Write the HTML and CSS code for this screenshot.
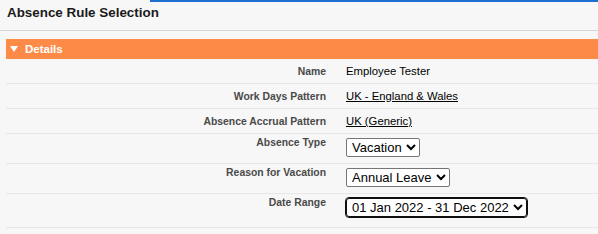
FILE: index.html
```html
<!DOCTYPE html>
<html>
<head>
<meta charset="utf-8">
<link rel="stylesheet" href="styles.css">
</head>
<body>
<div class="topbar"></div>
<div class="header">
  <h1 class="title">Absence Rule Selection</h1>
</div>
<div class="section">
  <div class="section-head"><span class="tri"></span>Details</div>
  <div class="rows">
    <div class="row text-row first-row">
      <div class="label">Name</div>
      <div class="value">Employee Tester</div>
    </div>
    <div class="row text-row">
      <div class="label">Work Days Pattern</div>
      <div class="value"><a class="link" href="#">UK - England &amp; Wales</a></div>
    </div>
    <div class="row text-row">
      <div class="label">Absence Accrual Pattern</div>
      <div class="value"><a class="link" href="#">UK (Generic)</a></div>
    </div>
    <div class="row sel-row">
      <div class="label">Absence Type</div>
      <div class="value"><select class="sel"><option>Vacation</option></select></div>
    </div>
    <div class="row sel-row">
      <div class="label">Reason for Vacation</div>
      <div class="value"><select class="sel"><option>Annual Leave</option></select></div>
    </div>
    <div class="row sel-row last-row">
      <div class="label">Date Range</div>
      <div class="value"><select class="sel focused"><option>01 Jan 2022 - 31 Dec 2022</option></select></div>
    </div>
  </div>
</div>
</body>
</html>
```

FILE: styles.css
```css
html, body {
  margin: 0;
  padding: 0;
  background: #f7f7f7;
  font-family: "Liberation Sans", Arial, sans-serif;
  color: #000;
}
.topbar {
  height: 2px;
  margin-left: 150px;
  background: #1f6fcf;
}
.header {
  height: 28px;
  border-bottom: 1px solid #d6d6d6;
}
.title {
  margin: 0;
  padding: 3px 0 0 7px;
  font-size: 13.4px;
  line-height: 16px;
  font-weight: bold;
  color: #1a1a1a;
}
.section {
  margin: 8px 0 0 6px;
}
.section-head {
  height: 20px;
  background: #fe8a47;
  color: #fff;
  font-weight: bold;
  font-size: 11.5px;
  line-height: 20px;
  display: flex;
  align-items: center;
  gap: 7px;
  padding-left: 4px;
}
.tri {
  width: 0;
  height: 0;
  border-left: 4px solid transparent;
  border-right: 4px solid transparent;
  border-top: 6px solid #fff;
}
.row {
  display: grid;
  grid-template-columns: 320px 1fr;
  column-gap: 20px;
  border-bottom: 1px solid #e7e7e7;
}
.text-row {
  padding: 5px 0 4px;
  align-items: baseline;
}
.first-row {
  padding-top: 5px;
}
.sel-row {
  padding: 4px 0 6px;
  align-items: start;
}
.last-row {
  padding-bottom: 10px;
}
.label {
  text-align: right;
  font-size: 10.4px;
  font-weight: bold;
  color: #4a4a4a;
  line-height: 14px;
}
.sel-row .label {
  line-height: 9px;
  padding-top: 0;
}
.value {
  font-size: 11.3px;
  line-height: 14px;
}
.sel-row .value {
  display: flex;
  align-items: flex-start;
  height: 19px;
}
.link {
  color: #000;
  text-decoration: underline;
}
.sel {
  font-family: "Liberation Sans", Arial, sans-serif;
  font-size: 13px;
  height: 19px;
  color: #000;
  background: #fff;
  border: 1px solid #767676;
  border-radius: 2px;
  padding: 0 1px;
  margin: 0;
}
.sel.focused {
  border-color: #101010;
  outline: 1px solid #101010;
  border-radius: 3px;
}
```
